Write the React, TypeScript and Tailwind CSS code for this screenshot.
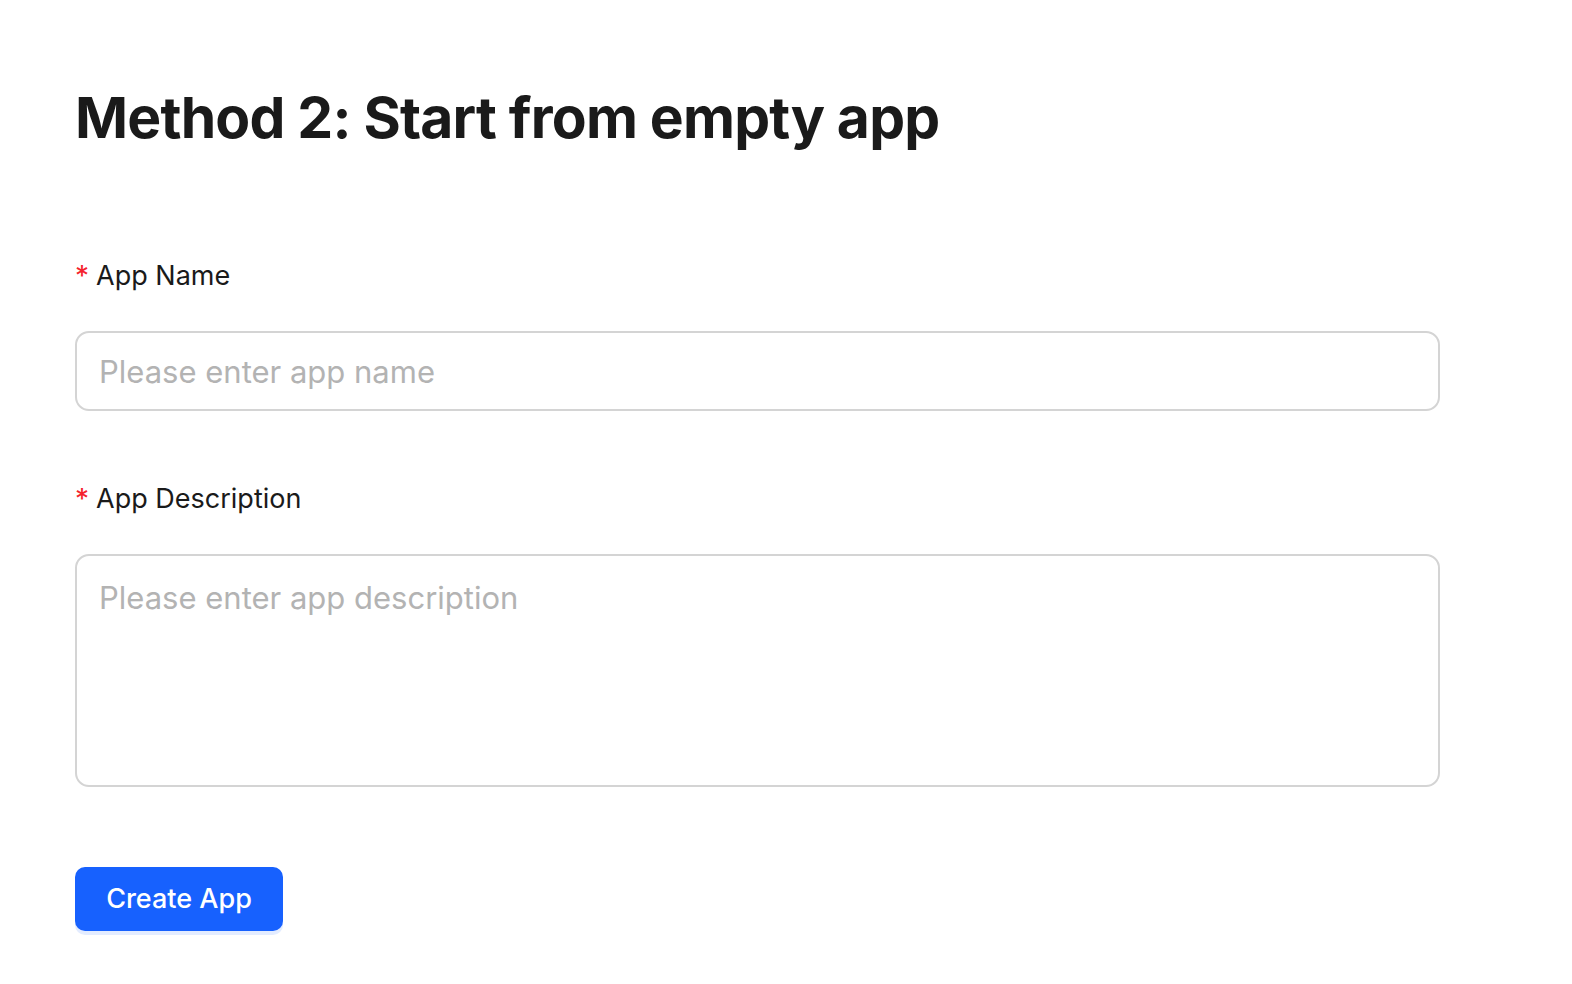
import { useState } from "react";

const App = () => {
  const [name, setName] = useState("");
  const [description, setDescription] = useState("");

  return (
    <div className="min-h-screen bg-white font-['Inter','Liberation_Sans',sans-serif] text-[#1a1a1a]">
      <div className="pl-[75px] pt-[80px]">
        <h1 className="text-[57px] font-bold leading-[76px] tracking-[-0.8px]">
          Method 2: Start from empty app
        </h1>

        <form className="mt-[101px] flex w-[1365px] flex-col" onSubmit={(e) => e.preventDefault()}>
          <label className="flex items-center text-[27px] leading-[38px]">
            <span className="mr-[7px] text-[28px] text-[#f5222d]">*</span>
            App Name
          </label>
          <input
            value={name}
            onChange={(e) => setName(e.target.value)}
            placeholder="Please enter app name"
            className="mt-[36px] h-[80px] w-full rounded-[14px] border-2 border-[#d4d4d4] px-[22px] text-[31px] outline-none placeholder:text-[#b3b3b3]"
          />

          <label className="mt-[69px] flex items-center text-[27px] leading-[38px]">
            <span className="mr-[7px] text-[28px] text-[#f5222d]">*</span>
            App Description
          </label>
          <textarea
            value={description}
            onChange={(e) => setDescription(e.target.value)}
            placeholder="Please enter app description"
            className="mt-[36px] h-[233px] w-full resize-none rounded-[14px] border-2 border-[#d4d4d4] px-[22px] py-[20px] text-[31px] leading-[44px] outline-none placeholder:text-[#b3b3b3]"
          />

          <div className="mt-[80px]">
            <button
              type="submit"
              className="h-[64px] w-[208px] rounded-[10px] bg-[#1761fe] text-[27px] font-medium text-white shadow-[0_4px_0_#e3ecff]"
            >
              Create App
            </button>
          </div>
        </form>
      </div>
    </div>
  );
};

export default App;
